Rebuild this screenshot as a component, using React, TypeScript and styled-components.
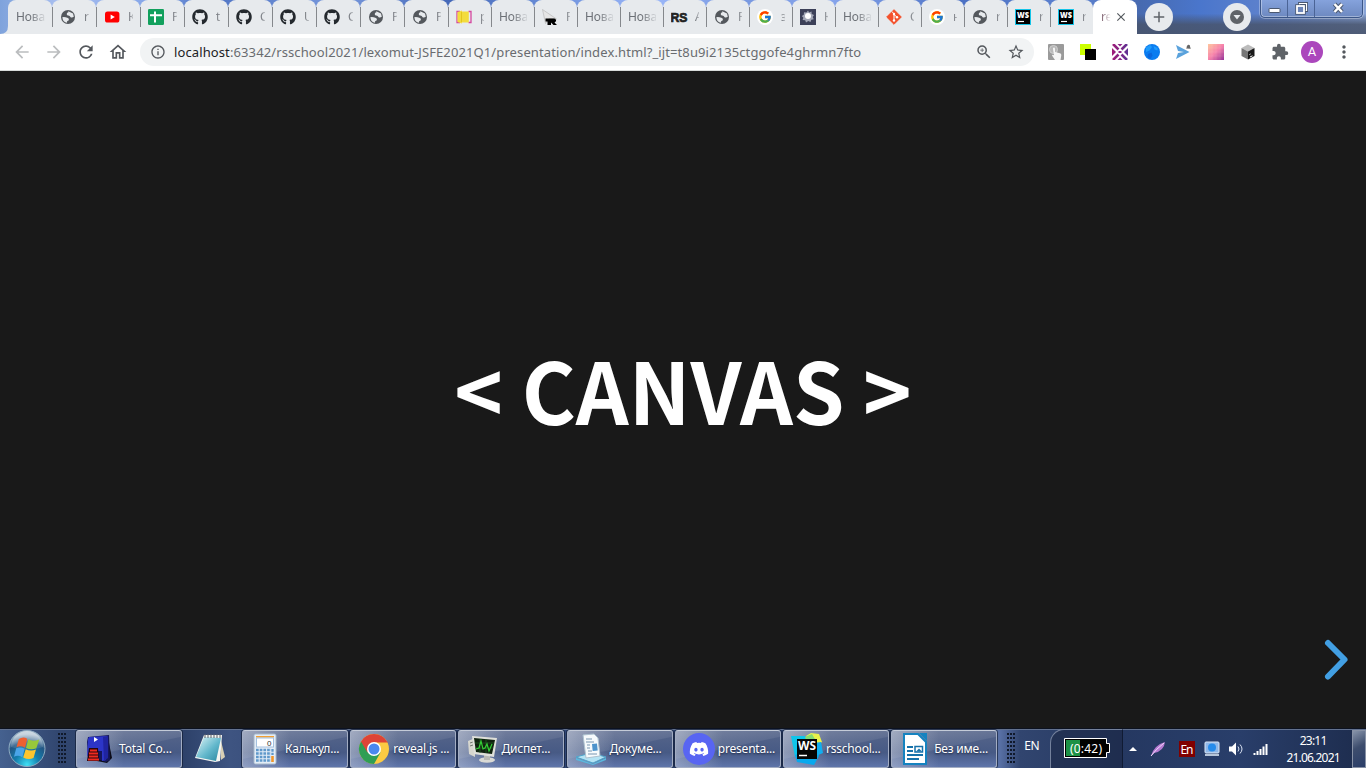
import React from 'react';
import styled, { createGlobalStyle, css } from 'styled-components';
import { FaGithub, FaDiscord } from 'react-icons/fa';
import { FcGoogle } from 'react-icons/fc';
import {
  MdArrowBack,
  MdArrowForward,
  MdRefresh,
  MdExtension,
  MdMoreVert,
  MdStarBorder,
  MdInfoOutline,
  MdOutlineHome,
  MdZoomIn,
  MdClose,
  MdAdd,
} from 'react-icons/md';

const Global = createGlobalStyle`
  *, *::before, *::after { box-sizing: border-box; }
  html, body { margin: 0; padding: 0; overflow: hidden; background: #191919; }
  svg { display: block; flex: none; }
`;

const uiFont = css`
  font-family: 'Noto Sans', 'Open Sans', sans-serif;
`;

const Screen = styled.div`
  width: 1366px;
  height: 768px;
  display: flex;
  flex-direction: column;
  overflow: hidden;
  ${uiFont}
`;

/* ---------- tab strip ---------- */

const TabStrip = styled.div`
  height: 34px;
  flex: none;
  display: flex;
  padding-left: 8px;
  position: relative;
  background:
    linear-gradient(180deg, transparent 40%, rgba(72, 84, 108, 0.85) 72%, rgba(72, 84, 108, 0.9) 100%) right / 230px 100% no-repeat,
    linear-gradient(90deg, #7fa3dc 0, #a9bff0 60px, #84a5e8 150px, #4f74c4 210px, #7898dc 340px, #4468b8 450px,
      #6f92dc 560px, #9cb8fa 650px, #7898e0 740px, #87a5ec 830px, #4c71c4 960px, #5d82d0 1080px, #476ab0 1140px,
      #4a76cc 1200px, #5f82cc 1270px, #8aa5d8 1366px);
`;

const Tab = styled.div<{ $width: number; $active?: boolean; $edge?: boolean }>`
  width: ${(p) => p.$width}px;
  height: 34px;
  flex: none;
  display: flex;
  align-items: center;
  padding: 0 ${(p) => (p.$active ? 9 : 7)}px 0 8px;
  border-radius: 8px 8px 0 0;
  background: ${(p) => (p.$active ? '#ffffff' : '#e7eaed')};
  position: relative;
  ${(p) =>
    !p.$active &&
    !p.$edge &&
    css`
      &::after {
        content: '';
        position: absolute;
        right: -1px;
        top: 7px;
        width: 1px;
        height: 20px;
        background: #85888c;
        z-index: 1;
      }
    `}
`;

const TabFill = styled.div`
  position: absolute;
  left: 0;
  top: 8px;
  width: 1137px;
  height: 26px;
  background: #e7eaed;
  clip-path: path('M0 26 Q8 26 8 18 L8 0 H1129 V26 Z');
`;

const TabLabel = styled.span<{ $wide?: boolean; $active?: boolean }>`
  flex: 1;
  overflow: hidden;
  white-space: nowrap;
  font-size: 12px;
  line-height: 18px;
  color: ${(p) => (p.$active ? '#8a6f7c' : '#6b6f75')};
  letter-spacing: -0.1px;
  margin-left: ${(p) => (p.$wide ? 0 : 7)}px;
  padding-left: ${(p) => (p.$wide ? 0 : 1)}px;
  mask-image: linear-gradient(90deg, #000 ${(p) => (p.$active ? '10%' : p.$wide ? '45%' : '25%')}, transparent ${(p) => (p.$active ? '75%' : p.$wide ? '108%' : '135%')});
`;

const Favicon = styled.span`
  width: 16px;
  height: 16px;
  flex: none;
  display: flex;
  align-items: center;
  justify-content: center;
`;

const GoogleDisc = styled.span`
  width: 16px;
  height: 16px;
  border-radius: 50%;
  background: #fff;
  display: flex;
  align-items: center;
  justify-content: center;
`;

const RoundButton = styled.div<{ $left: number }>`
  width: 28px;
  height: 28px;
  margin: 3px 0 0 ${(p) => p.$left}px;
  border-radius: 50%;
  background: #e7eaed;
  color: #5f6368;
  display: flex;
  align-items: center;
  justify-content: center;
`;

const WindowButtons = styled.div`
  display: flex;
  margin-left: 9px;
  width: 103px;
  height: 18px;
  border: 1px solid #3b5688;
  border-top: 0;
  border-radius: 0 0 5px 5px;
  box-shadow: inset 0 -1px rgba(255, 255, 255, 0.35), inset 1px 0 rgba(255, 255, 255, 0.35), 0 0 0 1px rgba(255, 255, 255, 0.3);
  background: linear-gradient(#85a2dc, #6d89c0);
`;

const WindowButton = styled.div<{ $w: number }>`
  width: ${(p) => p.$w}px;
  display: flex;
  align-items: center;
  justify-content: center;
  border-right: 1px solid #4b6496;
  &:last-child {
    border-right: 0;
  }
`;

/* ---------- toolbar ---------- */

const Toolbar = styled.div`
  height: 37px;
  flex: none;
  display: flex;
  align-items: center;
  padding: 0 0 1px 12px;
  background: #fff;
  border-bottom: 1px solid #d7dbd9;
  color: #54585d;
`;

const NavButton = styled.div<{ $dim?: boolean }>`
  width: 20px;
  margin-right: 12px;
  display: flex;
  justify-content: center;
  color: ${(p) => (p.$dim ? '#bbbdbf' : '#54585d')};
`;

const Omnibox = styled.div`
  width: 894px;
  height: 28px;
  border-radius: 14px;
  background: #f1f3f4;
  display: flex;
  align-items: center;
  padding: 0 9px 0 10px;
`;

const Url = styled.div`
  flex: 1;
  margin-left: 8px;
  font-size: 13px;
  line-height: 20px;
  letter-spacing: 0.11px;
  white-space: nowrap;
  color: #696c70;
  b {
    font-weight: 400;
    color: #202124;
  }
`;

const ZoomMark = styled.span`
  margin-right: 14px;
`;

const Extensions = styled.div`
  display: flex;
  gap: 16px;
  margin-left: 14px;
`;

const ExtSlot = styled.span`
  width: 16px;
  height: 16px;
  display: flex;
  align-items: center;
  justify-content: center;
`;

const Avatar = styled.div`
  width: 22px;
  height: 22px;
  border-radius: 50%;
  margin: 0 11px 0 13px;
  background: #ab47bc;
  color: #fff;
  font: 13px/22px Roboto, sans-serif;
  text-align: center;
`;

/* ---------- slide ---------- */

const Slide = styled.main`
  flex: 1;
  position: relative;
  display: flex;
  align-items: center;
  justify-content: center;
  padding-bottom: 22px;
  background: #191919;
`;

const Title = styled.h1`
  margin: 0;
  color: #fff;
  font: 700 85.5px/1.2 'Noto Sans CJK SC', sans-serif;
  white-space: nowrap;
  transform: scaleX(0.965);
`;

const NextArrow = styled.svg`
  position: absolute;
  right: 14px;
  bottom: 46px;
`;

/* ---------- taskbar ---------- */

const Taskbar = styled.footer`
  height: 40px;
  flex: none;
  display: flex;
  border-top: 1px solid #0c1220;
  box-shadow: inset 0 1px #62718f;
  background: linear-gradient(90deg, #45618f 0, #31466f 60px, #2c4068 180px, #3e5481 230px, #2d4270 350px, #32497a 700px,
    #2c3f69 900px, #5870a5 1000px, #31456f 1020px, #253861 1120px, #293e6a 1240px, #1d2c4d 1366px);
`;

const StartOrb = styled.div`
  width: 38px;
  margin: 0 12px 0 8px;
  flex: none;
`;

const Grip = styled.div<{ $gap?: number }>`
  width: 9px;
  height: 32px;
  flex: none;
  margin: 4px 0 0 ${(p) => p.$gap ?? 0}px;
  background: radial-gradient(circle at 1px 1px, #10192b 0.9px, transparent 1.1px) 0 0 / 3px 4px;
`;

const Task = styled.div<{ $gap?: number }>`
  width: 106px;
  height: 38px;
  margin: 1px 0 0 ${(p) => p.$gap ?? 2}px;
  flex: none;
  display: flex;
  align-items: center;
  padding: 0 5px 0 7px;
  border: 1px solid #a3adc3;
  border-top-color: #c4cbd8;
  border-radius: 3px;
  box-shadow: 0 0 0 1px rgba(17, 27, 50, 0.65);
  background:
    linear-gradient(168deg, rgba(255, 255, 255, 0.2) 0, rgba(255, 255, 255, 0.08) 47%, transparent 49%),
    linear-gradient(90deg, rgba(218, 224, 236, 0.4), transparent 45%),
    linear-gradient(#56658a, #475a85 60%, #5f75aa);
`;

const TaskIcon = styled.span`
  width: 32px;
  height: 32px;
  flex: none;
  margin-right: 3px;
`;

const TaskLabel = styled.span`
  color: #fff;
  font-size: 12px;
  line-height: 18px;
  letter-spacing: -0.2px;
  white-space: nowrap;
  text-shadow: 0 1px 2px #1a2540;
`;

const PinnedIcon = styled.span`
  width: 32px;
  margin: 4px 0 0 12px;
  flex: none;
`;

const Lang = styled.span`
  width: 34px;
  flex: none;
  padding-left: 8px;
  color: #fff;
  font-size: 12px;
  line-height: 34px;
  letter-spacing: -0.3px;
`;

const BatteryPane = styled.div`
  width: 73px;
  height: 39px;
  flex: none;
  padding: 8px 0 0 13px;
  border-left: 1px solid #74819c;
  border-top: 1px solid #74819c;
  border-right: 1px solid #101b33;
  border-top-left-radius: 14px;
  background: rgba(24, 34, 58, 0.45);
`;

const Tray = styled.div`
  flex: 1;
  display: flex;
  align-items: center;
  padding-left: 6px;
`;

const TraySlot = styled.span<{ $w: number }>`
  width: ${(p) => p.$w}px;
  flex: none;
  display: flex;
  justify-content: center;
`;

const Clock = styled.div`
  width: 72px;
  flex: none;
  color: #fff;
  text-align: center;
  font-size: 12px;
  line-height: 17px;
  letter-spacing: -0.8px;
`;

const ShowDesktop = styled.div`
  width: 14px;
  height: 38px;
  margin-top: 1px;
  flex: none;
  border: 1px solid #8791a5;
  background: linear-gradient(150deg, #8793a9 0, #3d4d6d 45%, #2a3d68);
`;

/* ---------- icons ---------- */

const Globe = () => (
  <svg width="16" height="16">
    <circle cx="8" cy="8" r="7" fill="#54585d" />
    <path d="M8.200 2.300L13 4.500l.8 3.300q-1.800 1.200-3.200.4Q9.800 6.300 8 6.500q-1.500-.3-1.200-1.800.2-1.300 1.500-1.100zM2.300 8.200q2.700-.4 5 .6 1.900.5 1.600 2-.4 1.300-1.700 1.300l-.2 1.600q-4-.3-4.700-5.500z" fill="#e7eaed" />
  </svg>
);
const Octocat = () => <FaGithub size={16} color="#24292e" />;
const Google = () => (
  <GoogleDisc>
    <FcGoogle size={14} />
  </GoogleDisc>
);
const YouTube = () => (
  <svg width="16" height="16">
    <rect x="1" y="2.5" width="14.4" height="11" rx="2.6" fill="#f00" />
    <path d="M6.6 5.4v5l4.2-2.5z" fill="#fff" />
  </svg>
);
const Sheets = () => (
  <svg width="16" height="16">
    <rect width="16" height="16" rx="1.2" fill="#12a05d" />
    <path d="M7 2.5v11M2 6.3h12" stroke="#fff" strokeWidth="2" fill="none" />
  </svg>
);
const Brackets = () => (
  <svg width="18" height="16">
    <path d="M5 2.500H2v11h3M13.500 2.500h2.500v11h-2.500" stroke="#d4489f" strokeWidth="1.3" fill="none" />
    <path d="M2.500 3l4.500-1.500v13L2.500 13zM6 2.500h7.800v11H6z" fill="#f3dc3c" />
    <path d="M6.5 3v10" stroke="#e2c41f" />
  </svg>
);
const CursorR = () => (
  <svg width="16" height="16">
    <path d="M.5.5l14 9.500-7.500-.5-3.500 5z" fill="#e5e5e5" stroke="#b2b2b2" strokeWidth=".6" />
    <path d="M3.500 9.500h8.500q2.500.5 2 2.700l-1.500 1.300 2.500 2.500h-3.500L9 13.500V16H5.500v-3.500h-2z" fill="#000" />
  </svg>
);
const RsMark = () => (
  <svg width="17" height="16">
    <text x="-.5" y="13" fontFamily="Liberation Sans, sans-serif" fontWeight="700" fontSize="13.500" textLength="17" lengthAdjust="spacingAndGlyphs" fill="#222" stroke="#222" strokeWidth=".7">
      RS
    </text>
  </svg>
);
const Burst = () => (
  <svg width="16" height="16">
    <rect width="16" height="16" fill="#3c4058" />
    <path d="M8 1.500l1.200 2 2.300-1 .2 2.500 2.300 1-1.300 2 1 2.200-2.400.6-.8 2.200-2.200-1L6 13.500l-.8-2.300-2.600-.2.800-2.300L1.800 7l2-1.300L4 3.200l2.400.4z" fill="#a3a7b6" />
    <circle cx="8" cy="7" r="3" fill="#fff" />
  </svg>
);
const GitMark = () => (
  <svg width="16" height="16">
    <path d="M8 .7L15.300 8 8 15.300.7 8z" fill="#f4512c" stroke="#f4512c" strokeLinejoin="round" />
    <path d="M6 2.500l2 2.500v6.500M8 5.500l3 2.700" stroke="#fff" fill="none" />
    <circle cx="8" cy="5" r="1.200" fill="#fff" />
    <circle cx="8" cy="11.500" r="1.200" fill="#fff" />
    <circle cx="11" cy="8.200" r="1.200" fill="#fff" />
  </svg>
);
const WsFav = () => (
  <svg width="16" height="16">
    <rect x=".5" y=".5" width="15" height="15" fill="#000" stroke="#14c4e8" />
    <text x="2" y="9" fontFamily="Open Sans, sans-serif" fontWeight="800" fontSize="8" textLength="12" lengthAdjust="spacingAndGlyphs" fill="#fff">
      WS
    </text>
    <path d="M3 12.500h6" stroke="#fff" strokeWidth="1.200" />
  </svg>
);

type TabInfo = { icon?: React.FC; text: string };
const tabs: TabInfo[] = [
  { text: 'Нова' },
  { icon: Globe, text: 'r' },
  { icon: YouTube, text: 'К' },
  { icon: Sheets, text: 'Р' },
  { icon: Octocat, text: 't' },
  { icon: Octocat, text: 'C' },
  { icon: Octocat, text: 'U' },
  { icon: Octocat, text: 'C' },
  { icon: Globe, text: 'P' },
  { icon: Globe, text: 'P' },
  { icon: Brackets, text: 'p' },
  { text: 'Нова' },
  { icon: CursorR, text: 'P' },
  { text: 'Нова' },
  { text: 'Нова' },
  { icon: RsMark, text: 'A' },
  { icon: Globe, text: 'P' },
  { icon: Google, text: 'з' },
  { icon: Burst, text: 'К' },
  { text: 'Нова' },
  { icon: GitMark, text: 'C' },
  { icon: Google, text: 'н' },
  { icon: Globe, text: 'r' },
  { icon: WsFav, text: 'r' },
  { icon: WsFav, text: 'r' },
];

const ExtensionIcons = () => (
  <Extensions>
    <ExtSlot>
      <svg width="16" height="16">
        <rect width="16" height="16" rx="1" fill="#9a9a9a" />
        <circle cx="5.500" cy="5.500" r="4" fill="#b8b8b8" stroke="#d0d0d0" />
        <path d="M5 4q1.500-1 2 .5V8l5 1.300q1.500.6 1.300 2L12.500 16H7l-3-4.500q.3-1.300 2-.3L5 5z" fill="#f5f5f5" />
      </svg>
    </ExtSlot>
    <ExtSlot>
      <svg width="16" height="16">
        <rect width="11" height="11" fill="#cf0" />
        <rect x="5" y="5" width="11" height="11" fill="#000" />
      </svg>
    </ExtSlot>
    <ExtSlot>
      <svg width="16" height="16">
        <defs>
          <linearGradient id="cross" gradientUnits="userSpaceOnUse" x1="0" y1="0" x2="16" y2="0">
            <stop stopColor="#a01c78" />
            <stop offset="1" stopColor="#5f3294" />
          </linearGradient>
        </defs>
        <path d="M1 0l5.500 5.500M15 0L9.500 5.500M1 16l5.500-5.500M15 16l-5.500-5.500" stroke="url(#cross)" strokeWidth="2.600" />
        <path d="M0 4l4 4-4 4zM16 4l-4 4 4 4z" fill="url(#cross)" />
        <path d="M5.500 0h5L8 2.500zM5.500 16h5L8 13.500zM6.500 7h3v2h-3z" fill="#8c288a" />
      </svg>
    </ExtSlot>
    <ExtSlot>
      <svg width="16" height="16">
        <circle cx="8" cy="8" r="8" fill="#0a7cf0" />
        <path d="M2 3.500l4-2.500 2 2-2.500 3.500-3.500 1.500zM9.500 2l4 2v2.500l-3-1z" fill="#1f9bfb" />
        <path d="M4 10l3.500-1.500 1 3-2 3.500-3-2z" fill="#0a66dc" />
      </svg>
    </ExtSlot>
    <ExtSlot>
      <svg width="16" height="16">
        <path d="M0 1l13.500 7L0 15l2-6 6-1-6-1z" fill="#5aa2dc" />
        <path d="M10 4.500q1-1 .8-2.200.7-1.800 2-1.500 1.400.2 1.300 2l.7 2z" fill="#666" />
      </svg>
    </ExtSlot>
    <ExtSlot>
      <svg width="16" height="16">
        <defs>
          <linearGradient id="pink" x2="1" y2="1">
            <stop stopColor="#ffc79e" />
            <stop offset=".5" stopColor="#f783ab" />
            <stop offset="1" stopColor="#963398" />
          </linearGradient>
        </defs>
        <rect width="16" height="16" fill="url(#pink)" />
        <path d="M0 4h16M0 8h16M0 12h16M4 0v16M8 0v16M12 0v16" stroke="#fff" strokeOpacity=".08" />
      </svg>
    </ExtSlot>
    <ExtSlot>
      <svg width="16" height="16">
        <path d="M8 .5l6.500 3.500L8 7.500 1.500 4z" fill="#bcbcbc" />
        <path d="M1.500 4L8 7.500v8L1.500 12z" fill="#777" />
        <path d="M14.500 4L8 7.500v8l6.500-3.500z" fill="#191919" />
        <path d="M9.500 10.500l1-.5M10 13l2.500-1.200" stroke="#fff" />
      </svg>
    </ExtSlot>
    <ExtSlot>
      <MdExtension size={18} color="#5f6368" />
    </ExtSlot>
  </Extensions>
);

const OrbIcon = () => (
  <svg width="38" height="38" viewBox="0 0 38 38">
    <defs>
      <radialGradient id="orb" cx=".5" cy=".95" r=".85">
        <stop stopColor="#3fe0f5" />
        <stop offset=".4" stopColor="#137fae" />
        <stop offset=".75" stopColor="#235683" />
        <stop offset="1" stopColor="#9fb6c8" />
      </radialGradient>
      <linearGradient id="gloss" x2="0" y2="1">
        <stop stopColor="#fff" stopOpacity=".5" />
        <stop offset="1" stopColor="#fff" stopOpacity=".05" />
      </linearGradient>
    </defs>
    <circle cx="19" cy="19.500" r="18" fill="url(#orb)" stroke="#8eabc0" />
    <path d="M3 18a16 16 0 0 1 32 0q-16 6-32 0z" fill="url(#gloss)" />
    <path d="M10.800 10q4.200-3 8.500-.3l-2.300 9q-4.500-2.500-8.500-.4z" fill="#ee6031" />
    <path d="M20.300 10.200q4.500 2.800 11 .2l-3 8.800q-5 2.300-10.300-.2z" fill="#98c83b" />
    <path d="M8.200 19.300q4-2 8.500.4l-2.400 8.500q-4.200-2.600-8.300-.4z" fill="#4aa5e8" />
    <path d="M17.700 20.200q5 2.500 10.300.3L25.500 29q-5 2.300-10.300-.5z" fill="#fcc52f" />
  </svg>
);

const FloppyIcon = () => (
  <svg width="32" height="32">
    <path d="M24 5l4 20-5 5-10-2z" fill="#0b0b18" />
    <path d="M3 9l1-5 21-2 1 25-4 2-18-6z" fill="#15175c" />
    <path d="M4 6l1-2 18-1-1 24-4 1v-10H6l-3 6z" fill="#2c35c8" />
    <path d="M19 4l5-1v22l-4 3z" fill="#2024a0" />
    <path d="M10 4l4 2.500-4 2.500z" fill="#fff" />
    <path d="M5 15h9l1 13H3z" fill="#26060c" />
    <path d="M6 17.500h7M5 20.500h9M5 23.500h9M4 26.500h11" stroke="#f12a20" strokeWidth="1.800" />
  </svg>
);

const NotepadIcon = () => (
  <svg width="32" height="32">
    <defs>
      <linearGradient id="note" x2="1" y2="1">
        <stop stopColor="#e1f5f7" />
        <stop offset=".55" stopColor="#63b8cc" />
        <stop offset="1" stopColor="#27869f" />
      </linearGradient>
    </defs>
    <path d="M26 4l5 20-4 3z" fill="#d8cfb4" />
    <path d="M10 2h18l-2 26-5 1-20-4z" fill="#f5f6f2" />
    <path d="M10 4l17 1-5 23-20-4z" fill="url(#note)" />
    <path d="M11 1v4M14 1v4M17 1v4M20 1v4M23 1v4M26 1v4" stroke="#5c6068" />
  </svg>
);

const CalcIcon = () => (
  <svg width="32" height="32">
    <rect x="4" y="1" width="22" height="30" rx="1.500" fill="#e3edf7" stroke="#a7b8cb" />
    <path d="M6 3h18v1.500H6z" fill="#f3a032" />
    <rect x="6.500" y="5" width="17" height="9" fill="#fff" stroke="#a4c0de" />
    <text x="17" y="12.500" fontFamily="Liberation Sans, sans-serif" fontSize="8" fill="#333">
      0
    </text>
    {[17, 20.5, 24, 27.5].map((y) => (
      <path key={y} d={`M6 ${y}h15`} stroke="#5f98ca" strokeWidth="2.300" strokeDasharray="2.700 1" />
    ))}
    <path d="M22.500 16v6" stroke="#5f98ca" strokeWidth="2.300" strokeDasharray="2.700 1" />
    <path d="M22.500 23v6" stroke="#f0962a" strokeWidth="2.600" />
  </svg>
);

const ChromeIcon = () => (
  <svg width="32" height="32" viewBox="0 0 32 32">
    <circle cx="16" cy="16" r="15" fill="#fbcb43" />
    <path d="M16 16L3 8.500A15 15 0 0 0 16 31l6.500-11.500z" fill="#2f9e54" />
    <path d="M3 8.500A15 15 0 0 1 29 8.500L30 9.500H16l-6.500 10z" fill="#de4437" />
    <circle cx="16" cy="16" r="7" fill="#fff" />
    <circle cx="16" cy="16" r="5.500" fill="#4a88ee" />
  </svg>
);

const MonitorIcon = () => (
  <svg width="32" height="32">
    <path d="M2 8l7-3v19l-6-3z" fill="#d7d7cf" />
    <path d="M4 10l3-1M4 13l3-1" stroke="#727970" />
    <ellipse cx="21" cy="27" rx="8" ry="2.800" fill="#dadad5" />
    <path d="M18 22h6v5h-6z" fill="#b8b9b4" />
    <path d="M6 3l25 2-3 19L8 21z" fill="#dfe0da" />
    <path d="M8 5l21 2-3 14-16-2z" fill="#10220f" />
    <path d="M9 10h19M9 15h18M14 6v14M20 6v14" stroke="#245e25" strokeWidth=".7" />
    <path d="M10 16l3-1 2-7 2 8 2-1 2-4 2 7 3-7" stroke="#33cf35" strokeWidth="1.200" fill="none" />
  </svg>
);

const DocumentIcon = () => (
  <svg width="32" height="32">
    <path d="M1 24l15-4 15 4-13 6z" fill="#b4e3f4" stroke="#4fa4ca" />
    <path d="M1 25l17 6 13-6v2l-13 5-17-5z" fill="#59b9df" />
    <path d="M8 2l11-1 4 4 2 18-14 2z" fill="#f6fafc" stroke="#adc2d0" />
    <path d="M11 6h6M11 9h8M12 12h3M12 15h3M13 18h4M13 21h9" stroke="#7896b1" />
    <path d="M17 11l5-.5.7 7-5 .5z" fill="#4c93cc" />
  </svg>
);

const DiscordBadge = () => (
  <svg width="32" height="32">
    <circle cx="16" cy="16" r="16" fill="#5865f2" />
    <FaDiscord x="6" y="6" size={20} color="#fff" />
  </svg>
);

const WebStormIcon = () => (
  <svg width="32" height="32">
    <path d="M0 3l14 0 5 12-6 11-9-2z" fill="#10c5ea" />
    <path d="M4 22l10-4 13-3 1 8-5 9-17-3z" fill="#07a9ee" />
    <path d="M15 3l5-3 8 1 3 8-9 6z" fill="#e8f14a" />
    <path d="M14 4l7-3 4 7-8 5z" fill="#85dc72" />
    <path d="M23 10l7-1 2 11-7 3z" fill="#10aff1" />
    <rect x="6" y="6" width="20" height="20" fill="#050505" />
    <text x="7" y="16.500" fontFamily="Open Sans, sans-serif" fontWeight="700" fontSize="11.500" textLength="18" lengthAdjust="spacingAndGlyphs" fill="#fff">
      WS
    </text>
    <path d="M8 22.500h8" stroke="#fff" strokeWidth="1.500" />
  </svg>
);

const WriterIcon = () => (
  <svg width="32" height="32">
    <path d="M5 1h14l8 8v22H5z" fill="#fff" stroke="#1583c0" strokeWidth="2" />
    <path d="M20 0h8v8z" fill="#1583c0" />
    <path d="M8 14h6M8 18h6M8 22h16M8 26h12" stroke="#1671aa" strokeWidth="2" />
    <rect x="16" y="13.500" width="7.500" height="5.500" fill="#fff" stroke="#1671aa" strokeWidth="1.500" />
    <path d="M17 18.500l3-3 3 3z" fill="#1671aa" />
  </svg>
);

const tasks = [
  { icon: CalcIcon, text: 'Калькул...' },
  { icon: ChromeIcon, text: 'reveal.js ...' },
  { icon: MonitorIcon, text: 'Диспет...' },
  { icon: DocumentIcon, text: 'Докуме...' },
  { icon: DiscordBadge, text: 'presenta...' },
  { icon: WebStormIcon, text: 'rsschool...' },
  { icon: WriterIcon, text: 'Без име...' },
];

const BatteryIcon = () => (
  <svg width="46" height="20">
    <path d="M.5.5h42v5h3v9h-3v5H.5z" fill="#000" stroke="#fff" />
    <rect x="2" y="2" width="14" height="16" fill="#1b9145" />
    <text x="6" y="14.500" fontFamily="Noto Sans, sans-serif" fontSize="12" textLength="32" fill="#fff">
      (0:42)
    </text>
  </svg>
);

export default function App() {
  return (
    <Screen>
      <Global />
      <TabStrip>
        <TabFill />
        {tabs.map(({ icon: Icon, text }, i) => (
          <Tab key={i} $width={i < 10 ? 44 : 43} $edge={i === tabs.length - 1}>
            {Icon && (
              <Favicon>
                <Icon />
              </Favicon>
            )}
            <TabLabel $wide={!Icon}>{text}</TabLabel>
          </Tab>
        ))}
        <Tab $width={44} $active>
          <TabLabel $wide $active>
            re
          </TabLabel>
          <MdClose size={14} color="#54585d" />
        </Tab>
        <RoundButton $left={8}>
          <MdAdd size={18} />
        </RoundButton>
        <RoundButton $left={50}>
          <svg width="14" height="14">
            <circle cx="7" cy="7" r="7" fill="#5f6368" />
            <path d="M3.500 5h7L7 9.500z" fill="#e7eaed" />
          </svg>
        </RoundButton>
        <WindowButtons>
          <WindowButton $w={28}>
            <svg width="13" height="18">
              <rect x="1" y="8.500" width="11" height="4" rx=".5" fill="#fff" stroke="#4b5870" />
            </svg>
          </WindowButton>
          <WindowButton $w={27}>
            <svg width="13" height="18">
              <path d="M4.500 3.500h7v7h-7z" fill="none" stroke="#4b5870" strokeWidth="3" />
              <path d="M4.500 3.500h7v7h-7z" fill="none" stroke="#fff" strokeWidth="1.200" />
              <rect x="2" y="6" width="7" height="7" fill="#6b84b8" stroke="#4b5870" strokeWidth="3.500" />
              <rect x="2" y="6" width="7" height="7" fill="#6b84b8" stroke="#fff" strokeWidth="1.800" />
            </svg>
          </WindowButton>
          <WindowButton $w={48}>
            <svg width="13" height="18">
              <path d="M2.500 4l7.500 8M10 4l-7.500 8" stroke="#4b5870" strokeWidth="4.400" />
              <path d="M2.500 4l7.500 8M10 4l-7.500 8" stroke="#fff" strokeWidth="2.500" />
            </svg>
          </WindowButton>
        </WindowButtons>
      </TabStrip>

      <Toolbar>
        <NavButton $dim>
          <MdArrowBack size={20} />
        </NavButton>
        <NavButton $dim>
          <MdArrowForward size={20} />
        </NavButton>
        <NavButton>
          <MdRefresh size={20} />
        </NavButton>
        <NavButton>
          <MdOutlineHome size={20} />
        </NavButton>
        <Omnibox>
          <MdInfoOutline size={16} />
          <Url>
            <b>localhost</b>:63342/rsschool2021/lexomut-JSFE2021Q1/presentation/index.html?_ijt=t8u9i2135ctggofe4ghrmn7fto
          </Url>
          <ZoomMark>
            <MdZoomIn size={18} />
          </ZoomMark>
          <MdStarBorder size={18} />
        </Omnibox>
        <ExtensionIcons />
        <Avatar>A</Avatar>
        <MdMoreVert size={20} />
      </Toolbar>

      <Slide>
        <Title>&lt; CANVAS &gt;</Title>
        <NextArrow width="30" height="46">
          <path d="M6 7L22.500 23.500 6 40.500" fill="none" stroke="#429fe3" strokeWidth="6" strokeLinecap="round" strokeLinejoin="round" />
        </NextArrow>
      </Slide>

      <Taskbar>
        <StartOrb>
          <OrbIcon />
        </StartOrb>
        <Grip />
        <Task $gap={9}>
          <TaskIcon>
            <FloppyIcon />
          </TaskIcon>
          <TaskLabel>Total Co...</TaskLabel>
        </Task>
        <PinnedIcon>
          <NotepadIcon />
        </PinnedIcon>
        {tasks.map(({ icon: Icon, text }, i) => (
          <Task key={text} $gap={i === 0 ? 16 : 2.2}>
            <TaskIcon>
              <Icon />
            </TaskIcon>
            <TaskLabel>{text}</TaskLabel>
          </Task>
        ))}
        <Grip $gap={10} />
        <Lang>EN</Lang>
        <BatteryPane>
          <BatteryIcon />
        </BatteryPane>
        <Tray>
          <TraySlot $w={8}>
            <svg width="8" height="5">
              <path d="M0 5l4-4 4 4z" fill="#fff" />
            </svg>
          </TraySlot>
          <TraySlot $w={41}>
            <svg width="16" height="16">
              <path d="M1 15Q4 4 15 1q-1 9-11 11z" fill="#b77bd3" />
              <path d="M1 15Q6 8 14 2" stroke="#f0d8fa" fill="none" />
            </svg>
          </TraySlot>
          <TraySlot $w={18}>
            <svg width="16" height="16">
              <rect width="16" height="16" fill="#800000" />
              <text x="1.500" y="12.500" fontFamily="Noto Sans, sans-serif" fontSize="12" textLength="13" fill="#fff">
                En
              </text>
            </svg>
          </TraySlot>
          <TraySlot $w={32}>
            <svg width="16" height="16">
              <rect x="1" y="1" width="14" height="11" rx="1" fill="#8fb7e8" stroke="#dce7f5" />
              <circle cx="8" cy="6.500" r="4" fill="#268bea" />
              <path d="M1 13h14v2H1z" fill="#b7c5d9" />
            </svg>
          </TraySlot>
          <TraySlot $w={16}>
            <svg width="16" height="16">
              <path d="M1 5.500h3l4-4v13l-4-4H1z" fill="#fff" />
              <path d="M10 5.500q2 2.500 0 5M12 3.500q4 4.500 0 9" stroke="#dce4f3" fill="none" />
            </svg>
          </TraySlot>
          <TraySlot $w={33}>
            <svg width="16" height="14">
              <path d="M1.500 11v2M4.500 9v4M7.500 7v6M10.500 4.500V13M13.500 2v11" stroke="#fff" strokeWidth="2" />
            </svg>
          </TraySlot>
          <Clock>
            23:11
            <br />
            21.06.2021
          </Clock>
        </Tray>
        <ShowDesktop />
      </Taskbar>
    </Screen>
  );
}
